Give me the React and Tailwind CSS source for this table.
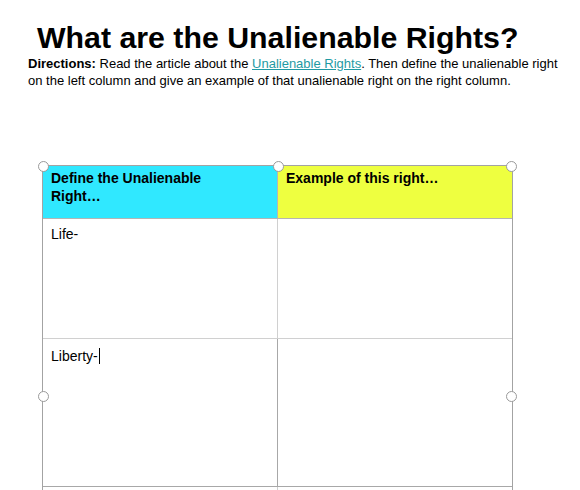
export default function App() {
  const handles = [
    "left-[-5px] top-[-5px]",
    "left-[230px] top-[-5px]",
    "right-[-5px] top-[-5px]",
    "left-[-5px] top-[225px]",
    "right-[-5px] top-[225px]",
  ];

  return (
    <div className="h-[490px] w-[580px] overflow-hidden bg-white font-['Liberation_Sans',Arial,sans-serif] text-black">
      <h1 className="pl-[37px] pt-[20px] text-[30.3px] font-bold leading-[35px]">
        What are the Unalienable Rights?
      </h1>
      <p className="pl-[28px] pr-[10px] text-[13px] leading-[17px]">
        <b>Directions:</b> Read the article about the{" "}
        <span className="text-[#1f9aa3] underline">Unalienable Rights</span>. Then define the
        unalienable right on the left column and give an example of that unalienable right on the
        right column.
      </p>

      <div className="relative ml-[42px] mt-[76px] w-[471px] border border-b-0 border-[#a3a3a3]">
        <div className="grid grid-cols-[235px_1fr]">
          <div className="h-[53px] border-r border-b border-[#b5b5b5] bg-[#30e8ff] px-2 pt-[3px] text-[14px] font-bold leading-[18px]">
            Define the Unalienable
            <br />
            Right…
          </div>
          <div className="h-[53px] border-b border-[#b5b5b5] bg-[#eeff40] px-2 pt-[3px] text-[14px] font-bold leading-[18px]">
            Example of this right…
          </div>

          <div className="h-[120px] border-r border-b border-[#d0d0d0] px-2 pt-[6px] text-[14px] leading-[18px]">
            Life-
          </div>
          <div className="h-[120px] border-b border-[#d0d0d0]" />

          <div className="h-[148px] border-r border-b border-[#a8a8a8] px-2 pt-[6px] text-[14px] leading-[18px]">
            Liberty-
            <span className="ml-px inline-block h-[16px] w-px translate-y-[3px] bg-black" />
          </div>
          <div className="h-[148px] border-b border-[#a8a8a8]" />

          <div className="h-[30px] border-r border-[#d0d0d0]" />
          <div className="h-[30px]" />
        </div>

        {handles.map((h) => (
          <span
            key={h}
            className={`absolute h-[11px] w-[11px] rounded-full border-[1.5px] border-[#9a9a9a] bg-white ${h}`}
          />
        ))}
      </div>
    </div>
  );
}
